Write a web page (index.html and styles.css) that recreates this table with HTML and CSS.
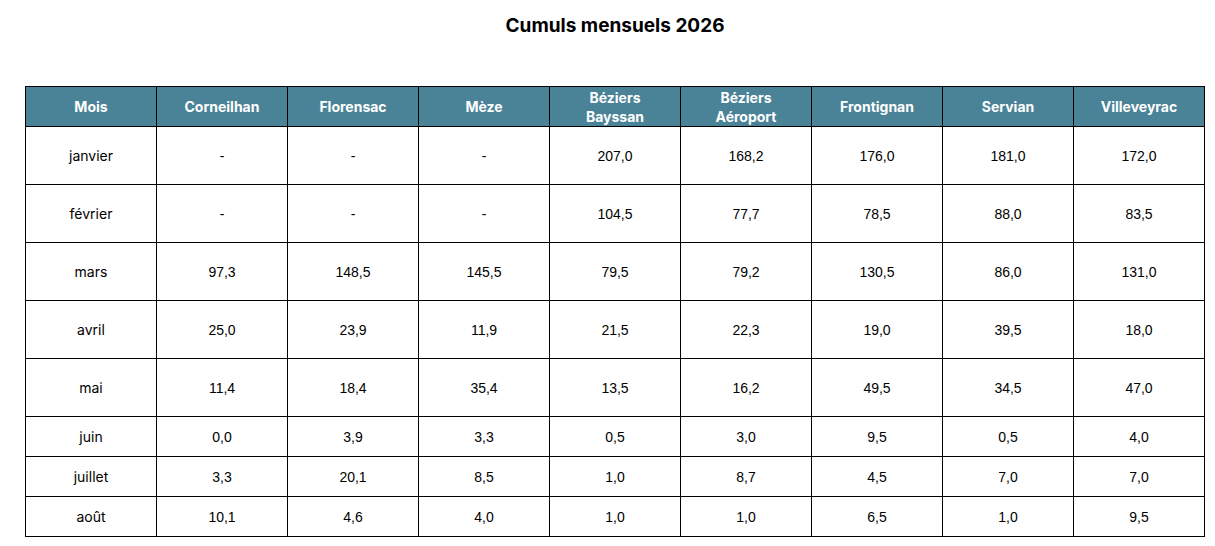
FILE: index.html
```html
<!DOCTYPE html>
<html lang="fr">
<head>
<meta charset="utf-8">
<title>Cumuls mensuels 2026</title>
<link rel="stylesheet" href="styles.css">
</head>
<body>
<div class="page">
  <h1 class="title">Cumuls mensuels 2026</h1>
  <table class="cumuls">
    <thead>
      <tr>
        <th>Mois</th>
        <th>Corneilhan</th>
        <th>Florensac</th>
        <th>Mèze</th>
        <th>Béziers<br>Bayssan</th>
        <th>Béziers<br>Aéroport</th>
        <th>Frontignan</th>
        <th>Servian</th>
        <th>Villeveyrac</th>
      </tr>
    </thead>
    <tbody>
      <tr class="tall"><td class="month">janvier</td><td>-</td><td>-</td><td>-</td><td>207,0</td><td>168,2</td><td>176,0</td><td>181,0</td><td>172,0</td></tr>
      <tr class="tall"><td class="month">février</td><td>-</td><td>-</td><td>-</td><td>104,5</td><td>77,7</td><td>78,5</td><td>88,0</td><td>83,5</td></tr>
      <tr class="tall"><td class="month">mars</td><td>97,3</td><td>148,5</td><td>145,5</td><td>79,5</td><td>79,2</td><td>130,5</td><td>86,0</td><td>131,0</td></tr>
      <tr class="tall"><td class="month">avril</td><td>25,0</td><td>23,9</td><td>11,9</td><td>21,5</td><td>22,3</td><td>19,0</td><td>39,5</td><td>18,0</td></tr>
      <tr class="tall"><td class="month">mai</td><td>11,4</td><td>18,4</td><td>35,4</td><td>13,5</td><td>16,2</td><td>49,5</td><td>34,5</td><td>47,0</td></tr>
      <tr class="short"><td class="month">juin</td><td>0,0</td><td>3,9</td><td>3,3</td><td>0,5</td><td>3,0</td><td>9,5</td><td>0,5</td><td>4,0</td></tr>
      <tr class="short"><td class="month">juillet</td><td>3,3</td><td>20,1</td><td>8,5</td><td>1,0</td><td>8,7</td><td>4,5</td><td>7,0</td><td>7,0</td></tr>
      <tr class="short"><td class="month">août</td><td>10,1</td><td>4,6</td><td>4,0</td><td>1,0</td><td>1,0</td><td>6,5</td><td>1,0</td><td>9,5</td></tr>
    </tbody>
  </table>
</div>
</body>
</html>
```

FILE: styles.css
```css
html, body {
  margin: 0;
  padding: 0;
  background: #ffffff;
}

.page {
  width: 1180px;
  padding: 15px 0 0 25px;
}

.title {
  margin: 0 0 50px 0;
  height: 21px;
  line-height: 21px;
  text-align: center;
  font-family: "Inter", "Noto Sans", sans-serif;
  font-weight: 700;
  font-size: 19px;
  color: #000000;
}

.cumuls {
  width: 1180px;
  border-collapse: collapse;
  table-layout: fixed;
}

.cumuls th,
.cumuls td {
  border: 1px solid #000000;
  text-align: center;
  vertical-align: middle;
  padding: 0;
}

.cumuls th {
  height: 39px;
  background: #4a8397;
  color: #ffffff;
  font-family: "Inter", "Noto Sans", sans-serif;
  font-weight: 700;
  font-size: 14px;
  line-height: 19px;
}

.cumuls td {
  font-family: "Liberation Sans", Arial, sans-serif;
  font-size: 14px;
  color: #000000;
}

.cumuls td.month {
  font-family: "Inter", "Noto Sans", sans-serif;
  font-size: 14px;
}

.cumuls tr.tall td {
  height: 57px;
}

.cumuls tr.short td {
  height: 39px;
}
```
